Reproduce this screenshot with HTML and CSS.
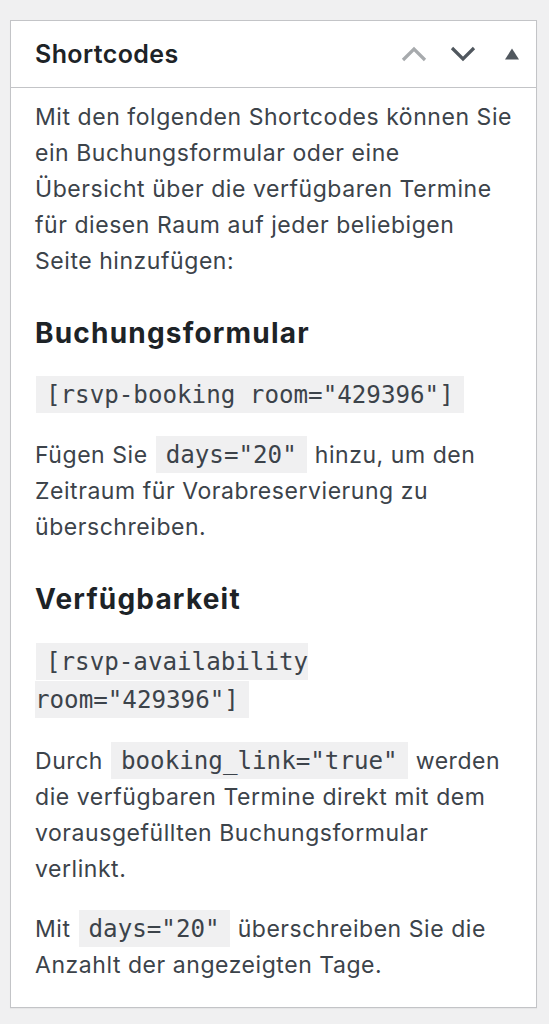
FILE: index.html
```html
<!DOCTYPE html>
<html lang="de">
<head>
<meta charset="utf-8">
<title>Shortcodes</title>
<link rel="stylesheet" href="styles.css">
</head>
<body>
<div class="postbox">
  <div class="postbox-header">
    <h2 class="hndle">Shortcodes</h2>
    <div class="handle-actions">
      <button class="handle-btn disabled" aria-label="Nach oben verschieben">
        <svg width="26" height="16" viewBox="0 0 26 16"><polyline points="2,14 13,3 24,14" fill="none" stroke="currentColor" stroke-width="3.2"/></svg>
      </button>
      <button class="handle-btn" aria-label="Nach unten verschieben">
        <svg width="26" height="16" viewBox="0 0 26 16"><polyline points="2,2 13,13 24,2" fill="none" stroke="currentColor" stroke-width="3.2"/></svg>
      </button>
      <button class="handle-btn" aria-label="Bedienfeld umschalten">
        <svg width="14" height="12" viewBox="0 0 14 12"><polygon points="7,0.5 14,11.5 0,11.5" fill="currentColor"/></svg>
      </button>
    </div>
  </div>
  <div class="inside">
    <p>Mit den folgenden Shortcodes können Sie ein Buchungsformular oder eine Übersicht über die verfügbaren Termine für diesen Raum auf jeder beliebigen Seite hinzufügen:</p>
    <h3>Buchungsformular</h3>
    <p class="shortcode"><code>[rsvp-booking room="429396"]</code></p>
    <p>Fügen Sie <code>days="20"</code> hinzu, um den Zeitraum für Vorabreservierung zu überschreiben.</p>
    <h3>Verfügbarkeit</h3>
    <p class="shortcode shortcode-wrap"><code>[rsvp-availability room="429396"]</code></p>
    <p>Durch <code>booking_link="true"</code> werden die verfügbaren Termine direkt mit dem vorausgefüllten Buchungsformular verlinkt.</p>
    <p>Mit <code>days="20"</code> überschreiben Sie die Anzahlt der angezeigten Tage.</p>
  </div>
</div>
</body>
</html>
```
FILE: styles.css
```css
html, body {
  margin: 0;
  background: #f0f0f1;
}
body {
  padding: 20px 12px 17px 10px;
  font-family: Inter, "Noto Sans", "Liberation Sans", sans-serif;
  color: #3c434a;
}
.postbox {
  background: #fff;
  border: 1px solid #c3c4c7;
  box-shadow: 0 1px 1px rgba(0,0,0,.04);
}
.postbox-header {
  display: flex;
  align-items: center;
  justify-content: space-between;
  height: 66px;
  border-bottom: 1px solid #c3c4c7;
  padding-left: 24px;
}
.hndle {
  margin: 0;
  font-size: 25px;
  font-weight: 600;
  color: #1d2327;
  letter-spacing: 0.4px;
}
.handle-actions {
  display: flex;
  height: 100%;
}
.handle-btn {
  width: 49px;
  height: 100%;
  padding: 0;
  margin: 0;
  border: 0;
  background: none;
  display: flex;
  align-items: center;
  justify-content: center;
  color: #50575e;
}
.handle-btn.disabled {
  color: #a7aaad;
}
.inside {
  padding: 11px 24px 0;
  display: flow-root;
  font-size: 23px;
  line-height: 36px;
  letter-spacing: 0.55px;
}
.inside p {
  margin: 24px 0;
}
.inside p:first-child {
  margin-top: 0;
}
.inside p.shortcode-wrap {
  line-height: 38px;
}
.inside h3 {
  margin: 36px 0 26px;
  font-size: 28px;
  line-height: 36px;
  font-weight: 700;
  color: #1d2327;
  letter-spacing: 1.2px;
}
code {
  font-family: "DejaVu Sans Mono", "Liberation Mono", monospace;
  font-size: 24.2px;
  letter-spacing: 0;
  background: #f0f0f1;
  color: #3c434a;
  padding: 5px 10px 4px;
  margin: 0 1px;
}
```
